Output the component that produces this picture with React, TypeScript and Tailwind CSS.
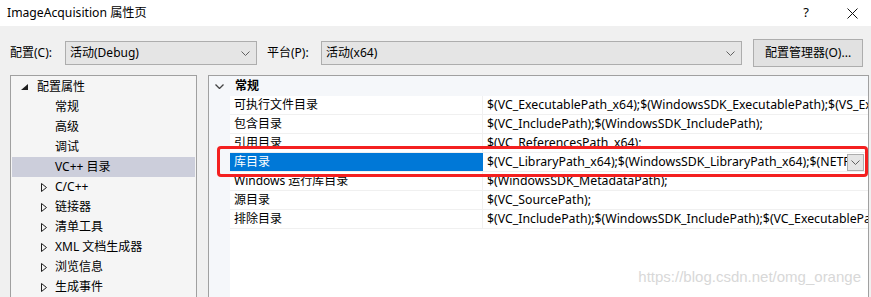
import React from "react";

const Chevron = ({ className = "" }: { className?: string }) => (
  <svg width="9" height="5" viewBox="0 0 9 5" className={className}>
    <polyline points="0.5,0.5 4.5,4.5 8.5,0.5" fill="none" stroke="#606060" strokeWidth="1" />
  </svg>
);

const Dropdown = ({ value, width }: { value: string; width: string }) => (
  <div className={`${width} h-[24px] bg-[#e5e5e5] border border-[#adadad] flex items-center justify-between pl-[4px] pr-[6px]`}>
    <span>{value}</span>
    <Chevron />
  </div>
);

const treeChildren = ["常规", "高级", "调试"];
const collapsed = ["C/C++", "链接器", "清单工具", "XML 文档生成器", "浏览信息", "生成事件"];

const rows = [
  { name: "可执行文件目录", value: "$(VC_ExecutablePath_x64);$(WindowsSDK_ExecutablePath);$(VS_ExecutablePath)" },
  { name: "包含目录", value: "$(VC_IncludePath);$(WindowsSDK_IncludePath);" },
  { name: "引用目录", value: "$(VC_ReferencesPath_x64);" },
  { name: "库目录", value: "$(VC_LibraryPath_x64);$(WindowsSDK_LibraryPath_x64);$(NETFXKitsDir)", selected: true },
  { name: "Windows 运行库目录", value: "$(WindowsSDK_MetadataPath);" },
  { name: "源目录", value: "$(VC_SourcePath);" },
  { name: "排除目录", value: "$(VC_IncludePath);$(WindowsSDK_IncludePath);$(VC_ExecutablePath_x64)" },
];

export default function App() {
  return (
    <div className="relative w-[871px] h-[297px] overflow-hidden bg-[#f0f0f0] text-[12px] text-black font-['Noto_Sans','Noto_Sans_CJK_SC',sans-serif]">
      {/* title bar */}
      <div className="h-[26px] bg-white flex items-center pl-[7px] pr-[13px]">
        <span className="text-[12.2px] flex-1">ImageAcquisition 属性页</span>
        <span className="text-[13px] mr-[38px]">?</span>
        <svg width="11" height="11" viewBox="0 0 11 11">
          <path d="M0.5 0.5 L10.5 10.5 M10.5 0.5 L0.5 10.5" stroke="#111" strokeWidth="1" />
        </svg>
      </div>

      {/* configuration row */}
      <div className="flex items-center h-[28px] mt-[13px] pl-[10px]">
        <span className="w-[55px]">配置(C):</span>
        <Dropdown value="活动(Debug)" width="w-[192px]" />
        <span className="ml-[10px] w-[54px]">平台(P):</span>
        <Dropdown value="活动(x64)" width="w-[421px]" />
        <div className="ml-[11px] w-[110px] h-[28px] bg-[#e1e1e1] border border-[#adadad] flex items-center justify-center">
          配置管理器(O)...
        </div>
      </div>

      {/* panels */}
      <div className="flex mt-[8px] pl-[10px] gap-[11px]">
        <div className="w-[187px] h-[230px] bg-[#f5f5f5] border border-[#a0a0a0] p-[1px]">
          <div className="h-[20px] flex items-center">
            <svg width="7" height="6" viewBox="0 0 7 6" className="ml-[9px] mr-[9px]">
              <polygon points="7,0 7,6 0,6" fill="#1e1e1e" />
            </svg>
            <span>配置属性</span>
          </div>
          {treeChildren.map((t) => (
            <div key={t} className="h-[20px] flex items-center pl-[43px]">{t}</div>
          ))}
          <div className="h-[20px] flex items-center pl-[43px] bg-[#cccedb]">VC++ 目录</div>
          {collapsed.map((t) => (
            <div key={t} className="h-[20px] flex items-center">
              <svg width="6" height="9" viewBox="0 0 6 9" className="ml-[29px] mr-[8px]">
                <polygon points="0.5,0.5 5.5,4.5 0.5,8.5" fill="none" stroke="#1e1e1e" strokeWidth="1" />
              </svg>
              <span>{t}</span>
            </div>
          ))}
        </div>

        <div className="w-[661px] h-[230px] bg-white border border-[#a0a0a0] flex flex-col">
          <div className="h-[20px] bg-[#f5f7fa] flex items-center shrink-0">
            <svg width="9" height="5" viewBox="0 0 9 5" className="ml-[6px] mr-[11px]">
              <polyline points="0.5,0.5 4.5,4.5 8.5,0.5" fill="none" stroke="#444" strokeWidth="1.3" />
            </svg>
            <span className="font-bold">常规</span>
          </div>
          <div className="flex flex-1">
            <div className="w-[21px] bg-[#f5f7fa] shrink-0" />
            <div className="flex-1 min-w-0">
              {rows.map((r) => (
                <div key={r.name} className="h-[19px] flex border-b border-[#f0f0f0]">
                  <div className={`w-[252px] shrink-0 flex items-center pl-[4px] ${r.selected ? "bg-[#0078d7] text-white" : ""}`}>
                    {r.name}
                  </div>
                  <div className={`w-[1px] ${r.selected ? "bg-[#0078d7]" : "bg-[#f0f0f0]"}`} />
                  <div className="flex-1 min-w-0 flex items-center pl-[4px] overflow-hidden">
                    <span className="whitespace-nowrap overflow-hidden flex-1 text-[12.3px]">{r.value}</span>
                    {r.selected && (
                      <div className="w-[17px] h-[17px] shrink-0 bg-[#e5e5e5] border border-[#adadad] flex items-center justify-center mr-[4px]">
                        <Chevron />
                      </div>
                    )}
                  </div>
                </div>
              ))}
            </div>
          </div>
        </div>
      </div>

      {/* annotation */}
      <div className="absolute left-[217px] top-[146px] w-[651px] h-[31px] border-[3px] border-[#f42020] rounded-[4px]" />
      <div className="absolute right-[10px] top-[266px] text-[15px] text-[#d8d8d8] font-['Liberation_Sans',sans-serif]">
        https://blog.csdn.net/omg_orange
      </div>
    </div>
  );
}
